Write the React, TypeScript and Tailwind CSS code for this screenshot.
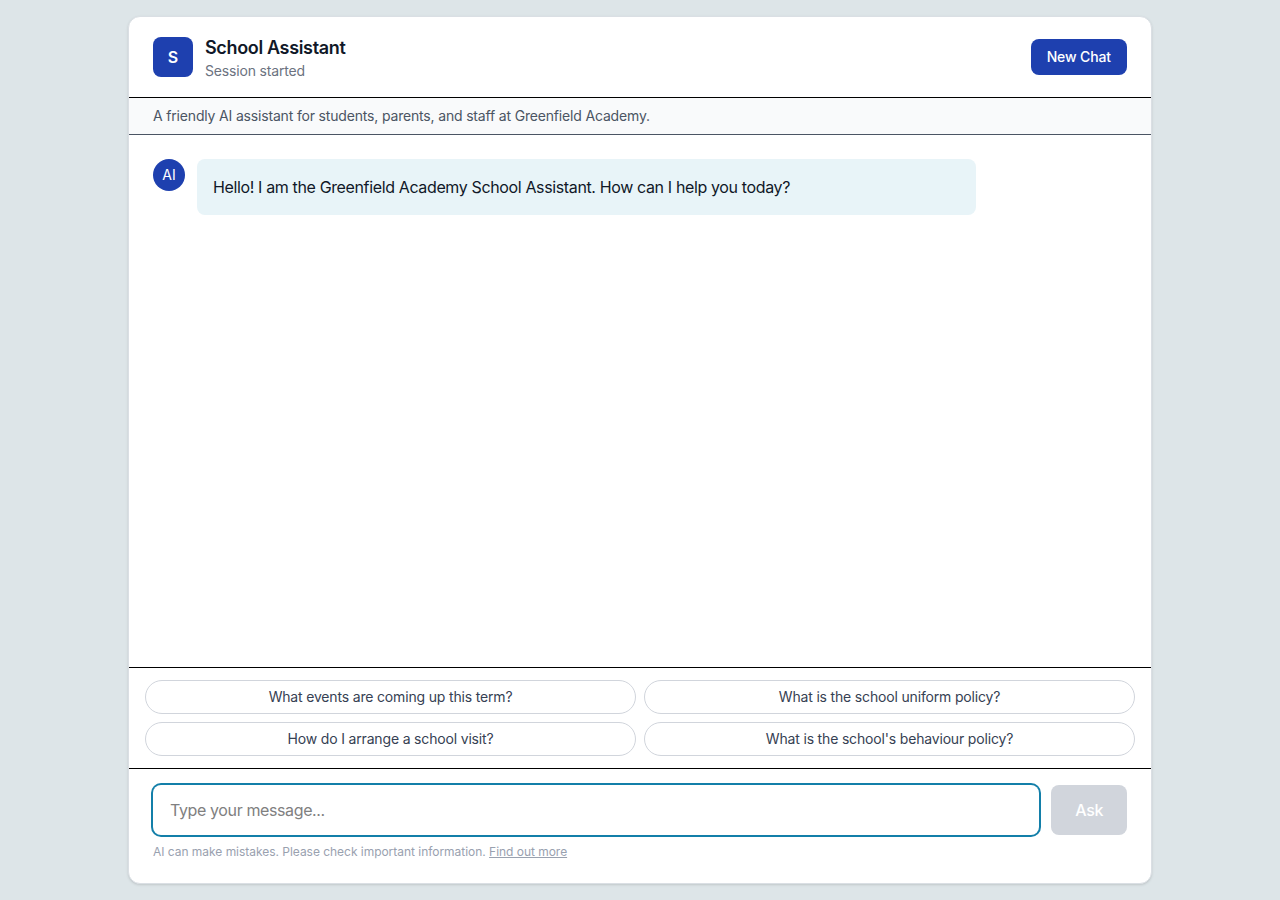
const suggestions = [
  'What events are coming up this term?',
  'What is the school uniform policy?',
  'How do I arrange a school visit?',
  "What is the school's behaviour policy?",
];

export default function App() {
  return (
    <div className="h-screen bg-[#dde5e8] p-4 font-['Inter',sans-serif] antialiased">
      <div className="mx-auto flex h-full max-w-5xl flex-col overflow-hidden rounded-xl border border-[#dadfe4] bg-white shadow-sm">
        {/* Header */}
        <header className="flex items-center justify-between border-b border-black px-6 py-4">
          <div className="flex items-center gap-3">
            <div className="flex h-10 w-10 items-center justify-center rounded-lg bg-[#1e40af] font-semibold text-white">
              S
            </div>
            <div>
              <h1 className="pt-px text-lg leading-[27px] font-semibold tracking-[-0.34px] text-gray-900">
                School Assistant
              </h1>
              <p className="text-sm tracking-[-0.17px] text-[#6b7280]">Session started</p>
            </div>
          </div>
          <button className="rounded-lg bg-[#1e40af] px-4 py-2 text-sm font-medium tracking-[-0.12px] text-white">
            New Chat
          </button>
        </header>

        <div className="border-b border-[#4b5563] bg-gray-50 px-6 py-2">
          <p className="text-sm tracking-[-0.172px] text-[#4b5563]">
            A friendly AI assistant for students, parents, and staff at Greenfield Academy.
          </p>
        </div>

        {/* Messages */}
        <main className="flex-1 overflow-y-auto p-6">
          <div className="flex items-start gap-3">
            <div className="flex h-8 w-8 shrink-0 items-center justify-center rounded-full bg-[#1e40af] text-sm text-white">
              AI
            </div>
            <div className="w-[80%] rounded-lg bg-[#e8f4f8] p-4 tracking-[-0.365px] text-gray-900">
              Hello! I am the Greenfield Academy School Assistant. How can I help you today?
            </div>
          </div>
        </main>

        {/* Suggested questions */}
        <div className="grid grid-cols-2 gap-2 border-t border-black px-4 py-3">
          {suggestions.map((question) => (
            <button
              key={question}
              className="rounded-full border border-gray-300 px-4 py-1.5 text-sm tracking-[-0.17px] text-gray-700"
            >
              {question}
            </button>
          ))}
        </div>

        {/* Composer */}
        <footer className="border-t border-black px-6 pt-4 pb-[23px]">
          <div className="flex gap-3">
            <input
              type="text"
              placeholder="Type your message..."
              className="h-[50px] flex-1 rounded-lg border border-transparent px-4 py-3 tracking-[-0.38px] ring-2 ring-[#137fa9] outline-none placeholder:text-[#808080]"
            />
            <button className="rounded-lg bg-gray-300 px-6 py-3 font-medium tracking-[-0.37px] text-white">
              Ask
            </button>
          </div>
          <p className="mt-[9px] text-xs tracking-[-0.03px] text-gray-400">
            AI can make mistakes. Please check important information.{' '}
            <a href="#" className="underline">
              Find out more
            </a>
          </p>
        </footer>
      </div>
    </div>
  );
}
